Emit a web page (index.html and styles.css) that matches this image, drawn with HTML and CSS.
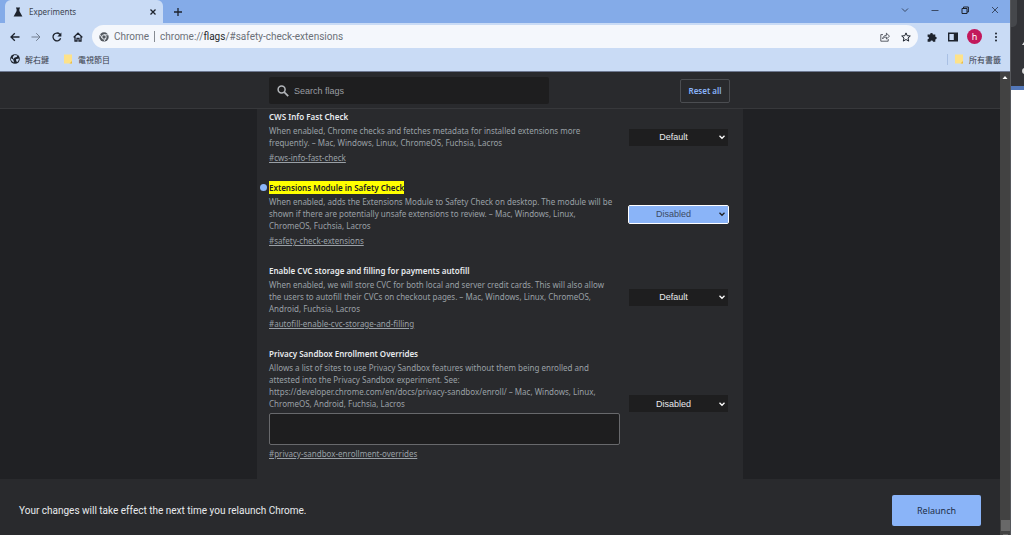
FILE: index.html
```html
<!DOCTYPE html>
<html lang="en">
<head>
<meta charset="utf-8">
<title>Experiments</title>
<link rel="stylesheet" href="styles.css">
</head>
<body>
<div class="desktop">
  <div class="window">
    <div class="tabstrip">
      <div class="tab">
        <svg class="icon-flask" viewBox="0 0 10 10"><path d="M3 0.5h4v1H6.4v2.6L9.4 9.5H0.6L3.6 4.1V1.5H3z" fill="#1d232d"/></svg>
        <span class="tab-title">Experiments</span>
        <button class="icon-btn" aria-label="Close tab"><svg class="icon-s" viewBox="0 0 8 8"><path d="M1.5 1.5l5 5M6.5 1.5l-5 5" class="stroke bold"/></svg></button>
      </div>
      <button class="icon-btn new-tab" aria-label="New tab"><svg class="icon-m" viewBox="0 0 10 10"><path d="M5 1v8M1 5h8" class="stroke bold"/></svg></button>
      <div class="window-controls">
        <button class="icon-btn" aria-label="Search tabs"><svg class="icon-s" viewBox="0 0 8 8"><path d="M1 2.5l3 3 3-3" class="stroke soft"/></svg></button>
        <button class="icon-btn" aria-label="Minimize"><svg class="icon-s" viewBox="0 0 8 8"><path d="M0.5 4.5h7" class="stroke soft"/></svg></button>
        <button class="icon-btn" aria-label="Restore"><svg class="icon-s" viewBox="0 0 8 8"><path d="M1 2.5h5v5H1zM2.5 2.5V1H7.4v5H6" class="stroke"/></svg></button>
        <button class="icon-btn" aria-label="Close"><svg class="icon-s" viewBox="0 0 8 8"><path d="M1 1l6 6M7 1L1 7" class="stroke soft"/></svg></button>
      </div>
    </div>

    <div class="toolbar">
      <div class="nav">
        <button class="icon-btn" aria-label="Back"><svg class="icon-m" viewBox="0 0 10 10"><path d="M9.5 5H1M4.8 1.2L1 5l3.8 3.8" class="stroke bold"/></svg></button>
        <button class="icon-btn faded" aria-label="Forward"><svg class="icon-m" viewBox="0 0 10 10"><path d="M0.5 5H9M5.2 1.2L9 5 5.2 8.8" class="stroke"/></svg></button>
        <button class="icon-btn" aria-label="Reload"><svg class="icon-m" viewBox="0 0 10 10"><path d="M8.6 6.2A3.9 3.9 0 1 1 7.8 2.3L8.6 3.1" class="stroke bold"/><path d="M9.4 0.4v4H5.4z" fill="#1d232d"/></svg></button>
        <button class="icon-btn" aria-label="Home"><svg class="icon-m" viewBox="0 0 10 10"><path d="M0.6 5.4L5 1.2l4.4 4.2M2 4.6V9h2V6.4h2V9h2V4.6" class="stroke bold"/></svg></button>
      </div>
      <div class="omnibox">
        <svg class="icon-m" viewBox="0 0 10 10"><circle cx="5" cy="5" r="4.7" fill="#53585f"/><circle cx="5" cy="5" r="2.2" fill="#53585f" stroke="#f4f7fc" stroke-width=".9"/><path d="M5 2.8h4.3M3.1 6.1L1 2.5M6.9 6.1L4.8 9.7" stroke="#f4f7fc" stroke-width=".8"/></svg>
        <span class="origin">Chrome</span>
        <span class="divider"></span>
        <span class="url">chrome://<b>flags</b>/#safety-check-extensions</span>
        <button class="icon-btn" aria-label="Share"><svg class="icon-m" viewBox="0 0 10 10"><path d="M3 2.6H.8v6.6h7.4V7M2.6 6.8C3 4.4 4.6 3.4 6.4 3.4V1.2L9.5 4.2 6.4 7V5.1C4.8 5.1 3.6 5.5 2.6 6.8z" class="stroke thin"/></svg></button>
        <button class="icon-btn" aria-label="Bookmark this tab"><svg class="icon-m" viewBox="0 0 10 10"><path d="M5 .9l1.2 2.8 3.1.3L7 6l.7 3.1L5 7.5 2.3 9.1 3 6 .7 4l3.1-.3z" class="stroke"/></svg></button>
      </div>
      <div class="actions">
        <button class="icon-btn" aria-label="Extensions"><svg class="icon-m" viewBox="0 0 10 10"><path d="M.6 2.4h2.5a1.4 1.4 0 1 1 2.8 0h2.4v2.3a1.4 1.4 0 1 1 0 2.8v2.3H6a1.3 1.3 0 0 0-2.6 0H.6V7.3a1.3 1.3 0 0 0 0-2.6z" fill="#1d232d"/></svg></button>
        <button class="icon-btn" aria-label="Side panel"><svg class="icon-m" viewBox="0 0 10 10"><path d="M0 0.5h10v9H0zM1.4 1.9v6.2h4.4V1.9z" fill="#1d232d" fill-rule="evenodd"/></svg></button>
        <button class="avatar" aria-label="Profile">h</button>
        <button class="icon-btn" aria-label="Menu"><svg class="icon-m" viewBox="0 0 10 10"><g fill="#1d232d"><circle cx="5" cy="1.4" r="1"/><circle cx="5" cy="5" r="1"/><circle cx="5" cy="8.6" r="1"/></g></svg></button>
      </div>
    </div>

    <div class="bookmarks">
      <a class="bookmark" href="#"><svg class="icon-m" viewBox="0 0 10 10"><circle cx="5" cy="5" r="4.8" fill="#1d232d"/><path d="M1 4.2L3.2 5.6 4 8.4 2.6 7.8 1 6zM4.5 1l3 .4-.8 1.6-2 .4L3.4 5 2.7 3zM6 5.2l2.6-.6.3 1.2L7.2 8.2 6.3 7z" fill="#c9dbf5"/></svg>解右鍵</a>
      <a class="bookmark" href="#"><svg class="icon-m" viewBox="0 0 10 10"><path d="M1 0.5h8v9H1z" fill="#fde28a"/><path d="M6.5 9.5L9 7v2.5z" fill="#e8bb4c"/></svg>電視節目</a>
      <a class="bookmark all" href="#"><svg class="icon-m" viewBox="0 0 10 10"><path d="M1 0.5h8v9H1z" fill="#fde28a"/><path d="M6.5 9.5L9 7v2.5z" fill="#e8bb4c"/></svg>所有書籤</a>
    </div>

    <div class="viewport">
      <div class="page">
        <header class="page-header">
          <div class="column header-row">
            <label class="search">
              <svg class="icon-search" viewBox="0 0 12 12"><circle cx="4.6" cy="4.6" r="3.5" fill="none" stroke="#b4b7bb" stroke-width="1.5"/><path d="M7.2 7.2l4 4" stroke="#b4b7bb" stroke-width="1.7"/></svg>
              <input type="text" placeholder="Search flags" aria-label="Search flags">
            </label>
            <button class="reset">Reset all</button>
          </div>
        </header>

        <main class="content">
          <div class="column list">
            <section class="experiment">
              <div class="info">
                <h3 id="t1">CWS Info Fast Check</h3>
                <p>When enabled, Chrome checks and fetches metadata for installed extensions more<br>frequently. – Mac, Windows, Linux, ChromeOS, Fuchsia, Lacros</p>
                <a href="#cws-info-fast-check">#cws-info-fast-check</a>
              </div>
              <div class="choice">
                <select aria-labelledby="t1"><option>Default</option><option>Enabled</option><option>Disabled</option></select>
                <svg viewBox="0 0 8 8"><path d="M1.5 2.8L4 5.3l2.5-2.5"/></svg>
              </div>
            </section>

            <section class="experiment changed">
              <div class="info">
                <h3 id="t2"><mark>Extensions Module in Safety Check</mark></h3>
                <p>When enabled, adds the Extensions Module to Safety Check on desktop. The module will be<br>shown if there are potentially unsafe extensions to review. – Mac, Windows, Linux,<br>ChromeOS, Fuchsia, Lacros</p>
                <a href="#safety-check-extensions">#safety-check-extensions</a>
              </div>
              <div class="choice">
                <select aria-labelledby="t2"><option>Default</option><option>Enabled</option><option selected>Disabled</option></select>
                <svg viewBox="0 0 8 8"><path d="M1.5 2.8L4 5.3l2.5-2.5"/></svg>
              </div>
            </section>

            <section class="experiment">
              <div class="info">
                <h3 id="t3">Enable CVC storage and filling for payments autofill</h3>
                <p>When enabled, we will store CVC for both local and server credit cards. This will also allow<br>the users to autofill their CVCs on checkout pages. – Mac, Windows, Linux, ChromeOS,<br>Android, Fuchsia, Lacros</p>
                <a href="#autofill-enable-cvc-storage-and-filling">#autofill-enable-cvc-storage-and-filling</a>
              </div>
              <div class="choice">
                <select aria-labelledby="t3"><option>Default</option><option>Enabled</option><option>Disabled</option></select>
                <svg viewBox="0 0 8 8"><path d="M1.5 2.8L4 5.3l2.5-2.5"/></svg>
              </div>
            </section>

            <section class="experiment">
              <div class="info">
                <h3 id="t4">Privacy Sandbox Enrollment Overrides</h3>
                <p>Allows a list of sites to use Privacy Sandbox features without them being enrolled and<br>attested into the Privacy Sandbox experiment. See:<br>https://developer.chrome.com/en/docs/privacy-sandbox/enroll/ – Mac, Windows, Linux,<br>ChromeOS, Android, Fuchsia, Lacros</p>
                <textarea aria-labelledby="t4"></textarea>
                <a href="#privacy-sandbox-enrollment-overrides">#privacy-sandbox-enrollment-overrides</a>
              </div>
              <div class="choice">
                <select aria-labelledby="t4"><option>Disabled</option><option>Enabled</option></select>
                <svg viewBox="0 0 8 8"><path d="M1.5 2.8L4 5.3l2.5-2.5"/></svg>
              </div>
            </section>
          </div>
        </main>

        <footer class="restart">
          <span>Your changes will take effect the next time you relaunch Chrome.</span>
          <button class="relaunch">Relaunch</button>
        </footer>
      </div>
      <div class="scrollbar">
        <svg viewBox="0 0 10 10"><path d="M2.5 7L5 4l2.5 3z" fill="#fff"/></svg>
        <div class="thumb"></div>
        <div class="scroll-end"></div>
      </div>
    </div>
  </div>
  <div class="behind">
    <div class="behind-bar">
      <svg viewBox="0 0 13 86" preserveAspectRatio="xMaxYMin slice"><path d="M0 0h6v22q0 4-4 5H0z" fill="#45474b"/><path d="M13 42v3h-2z" fill="#ddd"/><circle cx="14" cy="71" r="3" fill="#ddd"/></svg>
    </div>
  </div>
</div>
</body>
</html>
```

FILE: styles.css
```css
* { box-sizing: border-box; }

body {
  margin: 0;
  font-family: "Noto Sans", "Noto Sans CJK TC", sans-serif;
  font-size: 8px;
  color: #e8eaed;
}

button, input, select, textarea { font: inherit; margin: 0; padding: 0; border: 0; }
button { background: none; color: inherit; }

.desktop { display: flex; height: 100vh; }
.window { flex: 1; min-width: 0; display: flex; flex-direction: column; border-right: 1px solid #55575b; }
.behind { width: 13px; background: #fff; }
.behind-bar { height: 90px; background: #333438; border-bottom: 4px solid #5378ba; }
.behind-bar svg { display: block; width: 13px; height: 86px; }

.icon-btn { display: grid; place-items: center; }
.icon-s { display: block; width: 8px; height: 8px; }
.icon-m { display: block; width: 10px; height: 10px; flex: none; }
.icon-flask { width: 10px; height: 10px; }
.stroke { fill: none; stroke: #1d232d; stroke-width: 1; }
.stroke.bold { stroke-width: 1.3; }
.stroke.thin { stroke-width: .7; }
.stroke.soft { stroke: #3a4a66; }
.faded { opacity: .5; }

.tabstrip { display: flex; align-items: center; height: 23px; padding-left: 5px; background: #84abe8; }
.tab {
  display: flex; align-items: center; gap: 6px;
  width: 158px; height: 23px; padding: 0 6px 0 8px;
  background: #c9dbf5; border-radius: 6px 6px 0 0; color: #3c4451;
}
.tab-title { flex: 1; }
.new-tab { margin-left: 10px; }
.window-controls { display: flex; gap: 22px; margin-left: auto; padding: 0 11px 4px 0; }

.toolbar { display: flex; align-items: center; gap: 9px; height: 26px; padding: 2px 9px 1px 10px; background: #c9dbf5; }
.nav { display: flex; gap: 11px; }
.omnibox {
  flex: 1; display: flex; align-items: center; gap: 5px;
  height: 23px; padding: 0 7px; border-radius: 12px;
  background: #f4f7fc; color: #6b7077; font-family: Roboto, sans-serif; font-size: 10px;
}
.omnibox .icon-btn { margin-left: 6px; }
.divider { width: 1px; height: 11px; background: #868b92; }
.url { flex: 1; }
.url b { font-weight: 400; color: #24272b; }
.actions { display: flex; align-items: center; gap: 11px; }
.avatar { width: 15px; height: 15px; border-radius: 50%; background: #c2185b; color: #fff; font-size: 9px; line-height: 14px; }
.actions .avatar { margin: 0 -2px; }

.bookmarks { display: flex; align-items: center; gap: 14px; height: 22px; padding: 0 9px 2px 10px; background: #c9dbf5; }
.bookmark { display: flex; align-items: center; gap: 5px; color: #39404c; text-decoration: none; }
.bookmark.all { margin-left: auto; padding-left: 6px; border-left: 1px solid #a9c0e4; }

.viewport { flex: 1; min-height: 0; display: flex; border-top: 1px solid #6d7890; }
.page { flex: 1; min-width: 0; display: flex; flex-direction: column; background: #202124; }
.column { width: 100%; max-width: 486px; margin: 0 auto; padding: 0 13px 0 12px; }

.page-header { background: #292a2d; border-bottom: 1px solid #37383b; padding: 5px 0 4px; }
.header-row { display: flex; align-items: center; justify-content: space-between; }
.search {
  display: flex; align-items: center; gap: 5px;
  flex: 0 1 280px; height: 27px; padding: 0 8px;
  background: #1e1e1f; border-radius: 2px;
}
.icon-search { width: 12px; height: 12px; }
.search input { flex: 1; min-width: 0; background: none; outline: 0; color: #e8eaed; font-family: "Liberation Sans", sans-serif; font-size: 9px; }
.search input::placeholder { color: #9a9da1; opacity: 1; }
.reset { width: 50px; height: 24px; border: 1px solid #4b4d51; border-radius: 2px; color: #8ab4f8; font-weight: 600; }

.content { flex: 1; min-height: 0; overflow: hidden; display: flex; }
.list { background: #292a2d; padding-top: 1px; padding-right: 15px; }
.experiment { display: flex; align-items: center; gap: 9px; margin-bottom: 17px; }
.info { position: relative; flex: 1; min-width: 0; }
.info h3 { margin: 0 0 2px; font-size: 8px; line-height: 13px; font-weight: 600; }
.info mark { display: inline-block; background: #ff0; color: #202124; font-weight: 600; }
.info p { margin: 0 0 3px; line-height: 12px; color: #9aa0a6; white-space: nowrap; }
.info a { display: block; width: fit-content; line-height: 12px; color: #9aa0a6; }
.info textarea { display: block; width: 100%; height: 32px; margin: 0 0 3px; padding: 4px; resize: none; background: #1e1e1f; border: 1px solid #68696c; border-radius: 2px; color: #e8eaed; }
.changed .info::before { content: ""; position: absolute; left: -9px; top: 3px; width: 7px; height: 7px; border-radius: 50%; background: #8ab4f8; }

.choice { display: grid; align-items: center; width: 99px; }
.choice select { grid-area: 1 / 1; appearance: none; width: 100%; height: 17px; padding: 0 10px 0 0; background: #1e1e1f; color: #e8eaed; font-family: "Liberation Sans", sans-serif; font-size: 9px; text-align: center; text-align-last: center; }
.choice svg { grid-area: 1 / 1; justify-self: end; width: 8px; height: 8px; margin-right: 2px; pointer-events: none; fill: none; stroke: #fff; stroke-width: 1.3; }
.changed .choice select { background: #8ab4f8; color: #3c4a63; outline: 1px solid #fff; border-radius: 1px; }
.changed .choice svg { stroke: #202124; }

.restart { display: flex; align-items: center; justify-content: space-between; height: 56px; padding: 7px 19px 0; background: #292a2d; font-size: 9px; }
.restart span { font-family: Roboto, sans-serif; font-size: 10px; }
.relaunch { width: 89px; height: 31px; border-radius: 2px; background: #8ab4f8; color: #202f49; }

.scrollbar { display: flex; flex-direction: column; align-items: center; width: 10px; background: #424242; }
.scrollbar svg { width: 10px; height: 10px; }
.thumb { width: 9px; height: 11px; margin-top: auto; background: #686868; }
.scroll-end { width: 5px; height: 1px; margin: 3px 0 0; background: #686868; }
```
